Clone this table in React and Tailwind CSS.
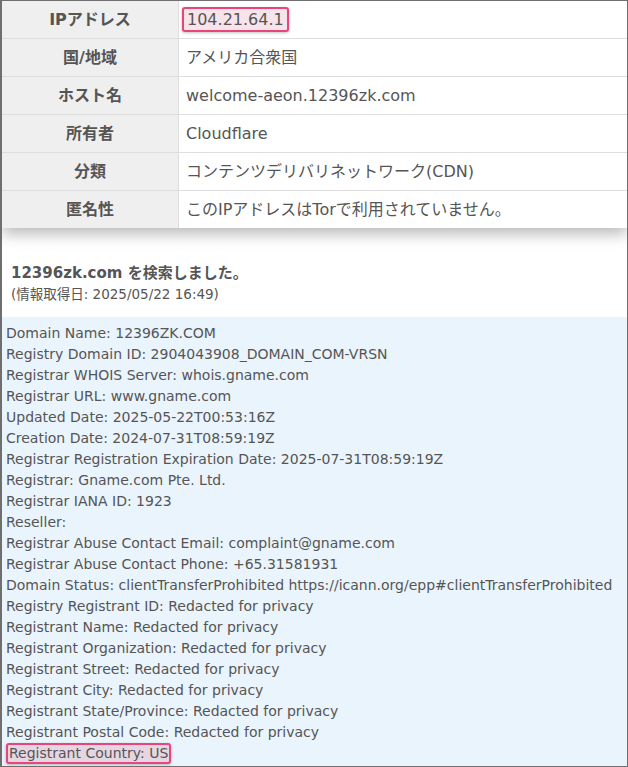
import React from 'react';

const rows = [
  { label: 'IPアドレス', value: '104.21.64.1', mark: true },
  { label: '国/地域', value: 'アメリカ合衆国' },
  { label: 'ホスト名', value: 'welcome-aeon.12396zk.com' },
  { label: '所有者', value: 'Cloudflare' },
  { label: '分類', value: 'コンテンツデリバリネットワーク(CDN)' },
  { label: '匿名性', value: 'このIPアドレスはTorで利用されていません。' },
];

const whois = [
  'Domain Name: 12396ZK.COM',
  'Registry Domain ID: 2904043908_DOMAIN_COM-VRSN',
  'Registrar WHOIS Server: whois.gname.com',
  'Registrar URL: www.gname.com',
  'Updated Date: 2025-05-22T00:53:16Z',
  'Creation Date: 2024-07-31T08:59:19Z',
  'Registrar Registration Expiration Date: 2025-07-31T08:59:19Z',
  'Registrar: Gname.com Pte. Ltd.',
  'Registrar IANA ID: 1923',
  'Reseller:',
  'Registrar Abuse Contact Email: complaint@gname.com',
  'Registrar Abuse Contact Phone: +65.31581931',
  'Domain Status: clientTransferProhibited https://icann.org/epp#clientTransferProhibited',
  'Registry Registrant ID: Redacted for privacy',
  'Registrant Name: Redacted for privacy',
  'Registrant Organization: Redacted for privacy',
  'Registrant Street: Redacted for privacy',
  'Registrant City: Redacted for privacy',
  'Registrant State/Province: Redacted for privacy',
  'Registrant Postal Code: Redacted for privacy',
];

const font = "font-['DejaVu_Sans','Noto_Sans_CJK_JP',sans-serif]";

export default function App() {
  return (
    <div className={`w-[628px] h-[767px] overflow-hidden bg-white border border-l-2 border-[#6f6f6f] text-[#555] ${font}`}>
      {/* IP info table */}
      <div className="relative z-10 shadow-[0_6px_14px_rgba(0,0,0,0.28)]">
        {rows.map((r, i) => (
          <div key={r.label} className={`flex ${i > 0 ? 'h-[38px] border-t border-[#dedede]' : 'h-[37px]'}`}>
            <div className="w-[177px] shrink-0 bg-[#efefef] border-r border-[#dedede] flex items-center justify-center font-bold text-[16px]">
              {r.label}
            </div>
            <div className={`flex-1 bg-white flex items-center text-[16px] ${r.mark ? 'pl-[3px]' : 'pl-[7px]'}`}>
              {r.mark ? (
                <span className="px-[3px] leading-[21px] rounded-[3px] border-2 border-[#e8457a] bg-[#f7e3ea] shadow-[0_1px_3px_rgba(0,0,0,0.25)]">
                  {r.value}
                </span>
              ) : (
                r.value
              )}
            </div>
          </div>
        ))}
      </div>

      {/* search heading */}
      <div className="px-[9px] pt-[34px] pb-[13px]">
        <div className="font-bold text-[15px] leading-[22px]">12396zk.com を検索しました。</div>
        <div className="text-[13.5px] leading-[20px]">(情報取得日: 2025/05/22 16:49)</div>
      </div>

      {/* whois body */}
      <div className="bg-[#eaf4fc] h-full px-[4px] pt-[6px] text-[14px] leading-[21px]">
        {whois.map((l) => (
          <div key={l} className="whitespace-nowrap">{l}</div>
        ))}
        <div>
          <span className="inline-block leading-[17px] px-[1px] rounded-[3px] border-2 border-[#e8457a] bg-[#e6d6e2] shadow-[0_1px_3px_rgba(0,0,0,0.25)]">
            Registrant Country: US
          </span>
        </div>
      </div>
    </div>
  );
}
